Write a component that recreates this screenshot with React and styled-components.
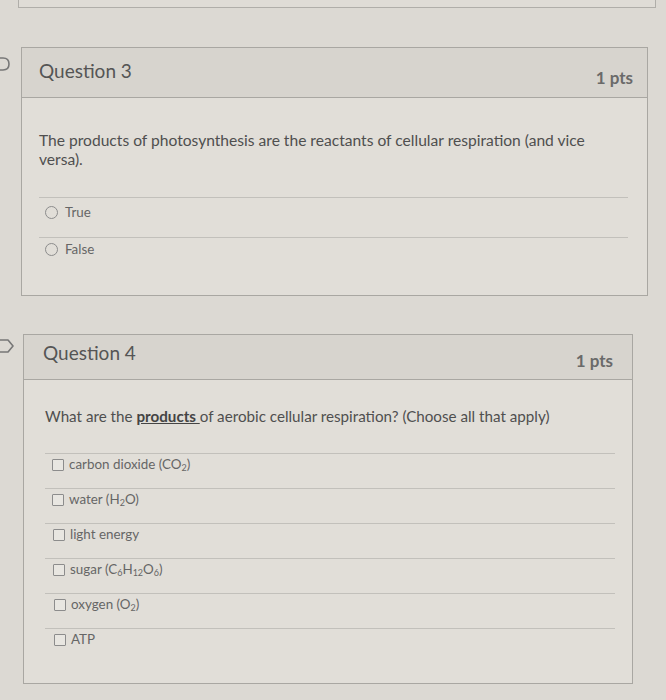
import React from "react";
import styled, { createGlobalStyle } from "styled-components";

const Global = createGlobalStyle`
  html, body { margin: 0; padding: 0; }
  body {
    background: #dcd9d3;
    font-family: Lato, "Open Sans", "Liberation Sans", sans-serif;
    color: #555;
    width: 666px;
    height: 700px;
    overflow: hidden;
  }
`;

const Page = styled.div`
  display: flex;
  flex-direction: column;
`;

const PrevCardStub = styled.div`
  margin-left: 18px;
  width: 636px;
  height: 7px;
  background: #dfdcd6;
  border: 1px solid #b0aea9;
  border-top: none;
`;

const QuestionRow = styled.div`
  display: flex;
  margin-top: ${(p) => p.$top}px;
`;

const Gutter = styled.div`
  width: ${(p) => p.$w}px;
  flex-shrink: 0;
  padding-top: ${(p) => p.$iconTop}px;
  box-sizing: border-box;
`;

const Card = styled.div`
  width: ${(p) => p.$w}px;
  border: 1px solid #a9a7a2;
  background: #e1ded8;
  box-sizing: border-box;
`;

const Header = styled.div`
  height: ${(p) => p.$h}px;
  background: #d7d4ce;
  border-bottom: 1px solid #a9a7a2;
  display: flex;
  justify-content: space-between;
  align-items: center;
  padding: 0 ${(p) => p.$pr}px 0 ${(p) => p.$pl}px;
  box-sizing: border-box;
`;

const Title = styled.div`
  font-size: 19px;
  font-weight: 400;
  color: #555;
  padding-bottom: ${(p) => p.$pb}px;
`;

const Points = styled.div`
  font-size: 17px;
  font-weight: 700;
  color: #6a6a6a;
  padding-top: ${(p) => p.$pt}px;
`;

const Body = styled.div`
  padding: ${(p) => p.$pt}px ${(p) => p.$pr}px 20px ${(p) => p.$pl}px;
`;

const Prompt = styled.div`
  font-size: ${(p) => p.$fs}px;
  line-height: 19px;
  color: #4f4f4f;
  max-width: 560px;
  margin-bottom: ${(p) => p.$mb}px;
`;

const Strong = styled.span`
  font-weight: 700;
  text-decoration: underline;
  color: #444;
`;

const Answer = styled.div`
  border-top: 1px solid #c2c0bb;
  height: ${(p) => p.$h}px;
  box-sizing: border-box;
  padding: ${(p) => p.$pt}px 0 0 ${(p) => p.$pl}px;
  display: flex;
  align-items: flex-start;
  gap: ${(p) => p.$gap}px;
  font-size: 13.4px;
  line-height: 19px;
  color: #666;
  sub { font-size: 9px; line-height: 0; vertical-align: -2px; }
`;

const Radio = styled.span`
  width: 11px;
  height: 11px;
  border: 1px solid #8c8c8c;
  border-radius: 50%;
  margin-top: 3px;
  flex-shrink: 0;
`;

const Check = styled.span`
  width: 10px;
  height: 10px;
  border: 1px solid #8c8c8c;
  border-radius: 1px;
  margin-top: 4px;
  flex-shrink: 0;
  background: #e8e6e1;
`;

const FlagRound = () => (
  <svg width="14" height="16" viewBox="0 0 14 16">
    <path d="M-6 2 H3 Q9 2 9 8 Q9 14 3 14 H-6" fill="none" stroke="#777" strokeWidth="1.6" />
  </svg>
);

const FlagTag = () => (
  <svg width="16" height="16" viewBox="0 0 16 16">
    <path d="M-6 2 H8 L13 8 L8 14 H-6" fill="none" stroke="#777" strokeWidth="1.6" strokeLinejoin="round" />
  </svg>
);

const q4Options = [
  <>carbon dioxide (CO<sub>2</sub>)</>,
  <>water (H<sub>2</sub>O)</>,
  <>light energy</>,
  <>sugar (C<sub>6</sub>H<sub>12</sub>O<sub>6</sub>)</>,
  <>oxygen (O<sub>2</sub>)</>,
  <>ATP</>,
];

export default function App() {
  return (
    <Page>
      <Global />
      <PrevCardStub />
      <QuestionRow $top={39}>
        <Gutter $w={21} $iconTop={9}>
          <FlagRound />
        </Gutter>
        <Card $w={627}>
          <Header $h={50} $pl={17} $pr={14}>
            <Title $pb={4}>Question 3</Title>
            <Points $pt={10}>1 pts</Points>
          </Header>
          <Body $pt={33} $pl={17} $pr={19}>
            <Prompt $fs={15.6} $mb={28}>
              The products of photosynthesis are the reactants of cellular respiration (and vice
              versa).
            </Prompt>
            <Answer $h={40} $pt={5} $pl={6} $gap={7}>
              <Radio />
              <span>True</span>
            </Answer>
            <Answer $h={38} $pt={2} $pl={6} $gap={7}>
              <Radio />
              <span>False</span>
            </Answer>
          </Body>
        </Card>
      </QuestionRow>
      <QuestionRow $top={38}>
        <Gutter $w={23} $iconTop={4}>
          <FlagTag />
        </Gutter>
        <Card $w={610}>
          <Header $h={45} $pl={19} $pr={19}>
            <Title $pb={10}>Question 4</Title>
            <Points $pt={6}>1 pts</Points>
          </Header>
          <Body $pt={27} $pl={21} $pr={17}>
            <Prompt $fs={15.2} $mb={27}>
              What are the <Strong>products </Strong>of aerobic cellular respiration? (Choose all that apply)
            </Prompt>
            {q4Options.map((o, i) => (
              <Answer key={i} $h={35} $pt={1} $pl={7 + Math.round(i * 0.4)} $gap={5}>
                <Check />
                <span>{o}</span>
              </Answer>
            ))}
          </Body>
        </Card>
      </QuestionRow>
    </Page>
  );
}
